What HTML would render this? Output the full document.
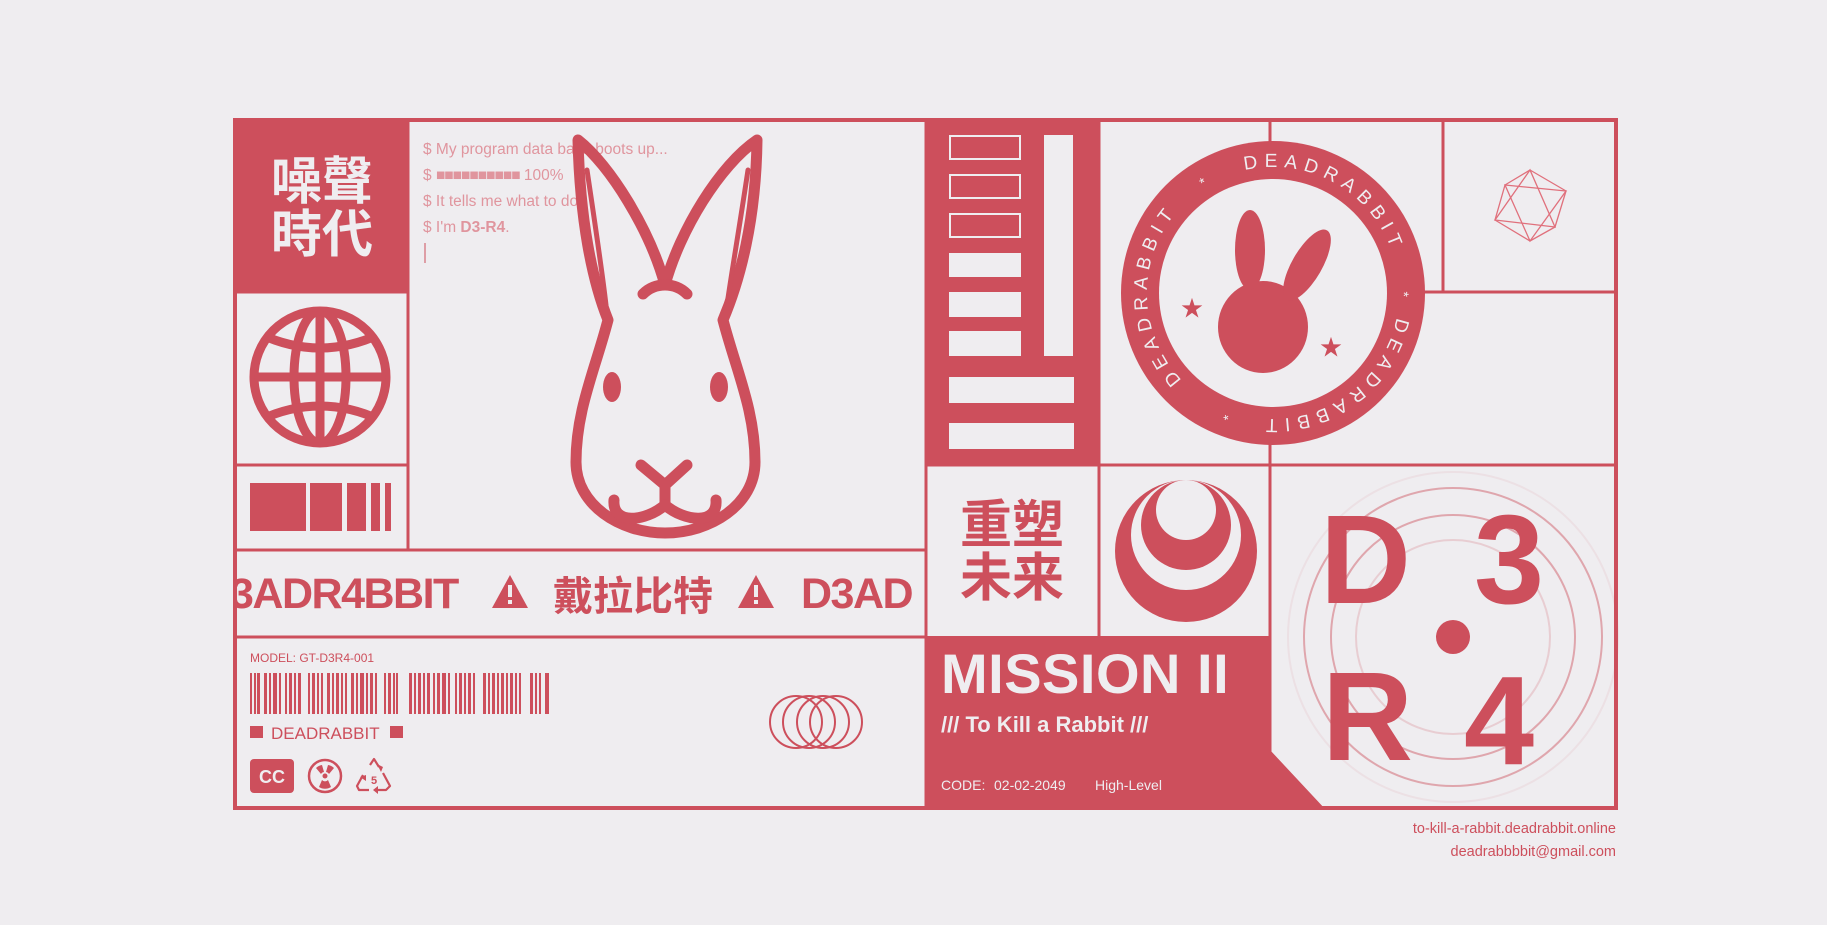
<!DOCTYPE html>
<html><head><meta charset="utf-8"><style>
html,body{margin:0;padding:0;background:#efedf0;}
svg{display:block}
</style></head><body>
<svg width="1827" height="925" viewBox="0 0 1827 925" xmlns="http://www.w3.org/2000/svg" font-family="Liberation Sans, Noto Sans CJK SC, sans-serif">
<defs>
<clipPath id="mq"><rect x="236" y="551" width="688" height="83"/></clipPath>
<clipPath id="gl"><circle cx="320" cy="377" r="66"/></clipPath>
<path id="ring" d="M1273,293 m0,-126 a126,126 0 1,1 0,252 a126,126 0 1,1 0,-252"/>
</defs>
<rect width="1827" height="925" fill="#efedf0"/>
<g fill="#cd4f5c">
<rect x="233" y="118" width="175" height="174"/>
<rect x="926" y="118" width="173" height="346"/>
<polygon points="926,636 1270,636 1270,750 1326,810 926,810"/>
</g>
<g stroke="#cd4f5c" stroke-width="3" fill="none">
<rect x="235" y="120" width="1381" height="688" stroke-width="4"/>
<line x1="408" y1="118" x2="408" y2="549"/>
<line x1="233" y1="292" x2="408" y2="292"/>
<line x1="233" y1="465" x2="408" y2="465"/>
<line x1="233" y1="550" x2="926" y2="550"/>
<line x1="233" y1="637" x2="926" y2="637"/>
<line x1="926" y1="118" x2="926" y2="810"/>
<line x1="1099" y1="118" x2="1099" y2="636"/>
<line x1="1270" y1="118" x2="1270" y2="810"/>
<line x1="926" y1="465" x2="1618" y2="465"/>
<line x1="1443" y1="118" x2="1443" y2="292"/>
<line x1="1270" y1="292" x2="1618" y2="292"/>
</g>
<g fill="#efedf0" font-weight="bold" font-size="51" font-family="Noto Sans CJK TC, sans-serif">
<text x="322" y="199" text-anchor="middle">噪聲</text>
<text x="322" y="252" text-anchor="middle">時代</text>
</g>
<g stroke="#cd4f5c" stroke-width="9" fill="none">
<circle cx="320" cy="377" r="66"/>
<g clip-path="url(#gl)">
<line x1="320" y1="311" x2="320" y2="443"/>
<line x1="254" y1="377" x2="386" y2="377"/>
<ellipse cx="320" cy="377" rx="26" ry="66"/>
<path d="M260,334 Q320,362 380,334"/>
<path d="M260,420 Q320,392 380,420"/>
</g>
</g>
<g fill="#cd4f5c">
<rect x="250" y="483" width="56" height="48"/><rect x="310" y="483" width="32" height="48"/>
<rect x="347" y="483" width="19" height="48"/><rect x="371" y="483" width="9" height="48"/><rect x="385" y="483" width="6" height="48"/>
</g>
<g fill="#e0959e" font-size="15.5">
<text x="423" y="154">$ My program data bank boots up...</text>
<text x="423" y="180">$ <tspan letter-spacing="-1">■■■■■■■■■■</tspan> 100%</text>
<text x="423" y="206">$ It tells me what to do</text>
<text x="423" y="232">$ I'm <tspan font-weight="bold">D3-R4</tspan>.</text>
</g>
<line x1="425" y1="243" x2="425" y2="263" stroke="#cd4f5c" stroke-width="1"/>
<g stroke="#cd4f5c" stroke-width="11" fill="none" stroke-linecap="round" stroke-linejoin="round">
<path d="M578,140 C580,220 592,280 608,320 C595,370 576,410 576,462 C576,505 620,533 665,533 C710,533 755,505 755,462 C755,410 736,370 723,320 C740,280 756,220 757,140 C720,165 680,230 665,285 C650,230 610,165 578,140 Z"/>
<path d="M587,170 C596,230 602,270 606,305" stroke-width="5"/>
<path d="M748,170 C739,230 732,270 727,305" stroke-width="5"/>
<path d="M643,294 C655,282 675,282 687,294"/>
<path d="M641,465 L665,485 L687,465 M665,485 L665,505"/>
<path d="M614,500 C612,525 645,522 665,505 C685,522 718,525 716,500"/>
</g>
<ellipse cx="612" cy="387" rx="9" ry="15" fill="#cd4f5c"/>
<ellipse cx="719" cy="387" rx="9" ry="15" fill="#cd4f5c"/>
<g fill="none" stroke="#efedf0" stroke-width="2">
<rect x="950" y="136" width="70" height="23"/><rect x="950" y="175" width="70" height="23"/><rect x="950" y="214" width="70" height="23"/>
</g>
<g fill="#efedf0">
<rect x="949" y="253" width="72" height="24"/><rect x="949" y="292" width="72" height="25"/><rect x="949" y="331" width="72" height="25"/>
<rect x="1044" y="135" width="29" height="221"/>
<rect x="949" y="377" width="125" height="26"/><rect x="949" y="423" width="125" height="26"/>
</g>
<circle cx="1273" cy="293" r="152" fill="#cd4f5c"/>
<circle cx="1273" cy="293" r="114" fill="#efedf0"/>
<g transform="rotate(-13 1273 293)" fill="#efedf0" font-size="19" letter-spacing="6.5">
<text><textPath href="#ring" startOffset="0">DEADRABBIT</textPath></text>
<text><textPath href="#ring" startOffset="251">DEADRABBIT</textPath></text>
<text><textPath href="#ring" startOffset="526">DEADRABBIT</textPath></text>
<text font-size="14" letter-spacing="0"><textPath href="#ring" startOffset="225">*</textPath></text>
<text font-size="14" letter-spacing="0"><textPath href="#ring" startOffset="467">*</textPath></text>
<text font-size="14" letter-spacing="0"><textPath href="#ring" startOffset="746">*</textPath></text>
</g>
<g fill="#cd4f5c">
<ellipse cx="1263" cy="327" rx="45" ry="46"/>
<ellipse cx="1250" cy="250" rx="15" ry="40"/>
<ellipse cx="1307" cy="265" rx="15" ry="40" transform="rotate(30 1307 265)"/>
<text x="1192" y="316" font-size="22" text-anchor="middle">★</text>
<text x="1331" y="355" font-size="22" text-anchor="middle">★</text>
</g>
<g stroke="#e0707c" stroke-width="1.3" fill="none">
<polygon points="1530,170 1566,191 1555,227 1530,241 1495,220 1505,185"/>
<polygon points="1530,170 1495,220 1555,227"/>
<polygon points="1530,241 1505,185 1566,191"/>
</g>
<g clip-path="url(#mq)" fill="#cd4f5c" font-weight="bold">
<text x="230" y="608" font-size="43" letter-spacing="-1.5">3ADR4BBIT</text>
<polygon points="510,575 528,608 492,608"/><rect x="508" y="585" width="4" height="12" fill="#efedf0"/><rect x="508" y="600" width="4" height="4" fill="#efedf0"/>
<text x="553" y="610" font-size="40" font-family="Noto Sans CJK SC, sans-serif">戴拉比特</text>
<polygon points="756,575 774,608 738,608"/><rect x="754" y="585" width="4" height="12" fill="#efedf0"/><rect x="754" y="600" width="4" height="4" fill="#efedf0"/>
<text x="801" y="608" font-size="43" letter-spacing="-1.5">D3AD</text>
</g>
<text x="250" y="662" font-size="12" fill="#cd4f5c">MODEL: GT-D3R4-001</text>
<g fill="#cd4f5c">
<rect x="250" y="673" width="2" height="41"/><rect x="254" y="673" width="2" height="41"/><rect x="257" y="673" width="3" height="41"/>
<rect x="264" y="673" width="3" height="41"/><rect x="269" y="673" width="2" height="41"/><rect x="273" y="673" width="4" height="41"/><rect x="279" y="673" width="2" height="41"/>
<rect x="285" y="673" width="2" height="41"/><rect x="289" y="673" width="3" height="41"/><rect x="294" y="673" width="2" height="41"/><rect x="298" y="673" width="3" height="41"/>
<rect x="308" y="673" width="2" height="41"/><rect x="312" y="673" width="3" height="41"/><rect x="317" y="673" width="2" height="41"/><rect x="321" y="673" width="2" height="41"/>
<rect x="327" y="673" width="3" height="41"/><rect x="332" y="673" width="2" height="41"/><rect x="336" y="673" width="3" height="41"/><rect x="341" y="673" width="2" height="41"/><rect x="345" y="673" width="2" height="41"/>
<rect x="351" y="673" width="3" height="41"/><rect x="356" y="673" width="2" height="41"/><rect x="360" y="673" width="4" height="41"/><rect x="366" y="673" width="2" height="41"/><rect x="370" y="673" width="3" height="41"/><rect x="375" y="673" width="2" height="41"/>
<rect x="384" y="673" width="2" height="41"/><rect x="388" y="673" width="3" height="41"/><rect x="393" y="673" width="2" height="41"/><rect x="396" y="673" width="2" height="41"/>
<rect x="409" y="673" width="3" height="41"/><rect x="414" y="673" width="2" height="41"/><rect x="418" y="673" width="3" height="41"/><rect x="423" y="673" width="2" height="41"/><rect x="427" y="673" width="3" height="41"/>
<rect x="433" y="673" width="2" height="41"/><rect x="437" y="673" width="3" height="41"/><rect x="442" y="673" width="4" height="41"/><rect x="448" y="673" width="2" height="41"/>
<rect x="455" y="673" width="2" height="41"/><rect x="459" y="673" width="3" height="41"/><rect x="464" y="673" width="2" height="41"/><rect x="468" y="673" width="3" height="41"/><rect x="473" y="673" width="2" height="41"/>
<rect x="483" y="673" width="3" height="41"/><rect x="488" y="673" width="2" height="41"/><rect x="492" y="673" width="3" height="41"/><rect x="497" y="673" width="2" height="41"/><rect x="501" y="673" width="3" height="41"/>
<rect x="506" y="673" width="2" height="41"/><rect x="510" y="673" width="3" height="41"/><rect x="515" y="673" width="2" height="41"/><rect x="519" y="673" width="2" height="41"/>
<rect x="530" y="673" width="3" height="41"/><rect x="535" y="673" width="2" height="41"/><rect x="539" y="673" width="2" height="41"/><rect x="545" y="673" width="4" height="41"/>
<rect x="250" y="726" width="13" height="12"/><rect x="390" y="726" width="13" height="12"/>
</g>
<text x="271" y="739" font-size="17" fill="#cd4f5c">DEADRABBIT</text>
<rect x="250" y="759" width="44" height="34" rx="4" fill="#cd4f5c"/>
<text x="272" y="783" font-size="18" font-weight="bold" fill="#efedf0" text-anchor="middle">CC</text>
<circle cx="325" cy="776" r="16" fill="none" stroke="#cd4f5c" stroke-width="2.5"/>
<g fill="#cd4f5c">
<circle cx="325" cy="776" r="2.5"/>
<path d="M316,768 A11,11 0 0,1 322,765 L324,772 A4,4 0 0,0 321,774 Z"/>
<path d="M334,768 A11,11 0 0,0 328,765 L326,772 A4,4 0 0,1 329,774 Z"/>
<path d="M319,787 A11,11 0 0,0 331,787 L328,780 A4,4 0 0,1 322,780 Z"/>
</g>
<g fill="none" stroke="#cd4f5c" stroke-width="2.2" stroke-linejoin="round">
<path d="M370,765 L374,759 L379,767"/>
<path d="M383,773 L390,786 L386,790 L378,790"/>
<path d="M369,790 L359,790 L357,786 L363,775"/>
</g>
<g fill="#cd4f5c">
<polygon points="377,764 383,767 381,772"/>
<polygon points="378,786 378,794 373,790"/>
<polygon points="360,777 366,775 366,781"/>
</g>
<text x="374" y="784" font-size="11" font-weight="bold" fill="#cd4f5c" text-anchor="middle">5</text>
<g fill="none" stroke="#cd4f5c" stroke-width="2">
<circle cx="796" cy="722" r="26"/><circle cx="809" cy="722" r="26"/><circle cx="823" cy="722" r="26"/><circle cx="836" cy="722" r="26"/>
</g>
<g fill="#cd4f5c" font-weight="bold" font-size="52" font-family="Noto Sans CJK SC, sans-serif">
<text x="1012" y="543" text-anchor="middle">重塑</text>
<text x="1012" y="596" text-anchor="middle">未来</text>
</g>
<circle cx="1186" cy="551" r="71" fill="#cd4f5c"/>
<circle cx="1186" cy="535" r="55" fill="#efedf0"/>
<circle cx="1186" cy="525" r="45" fill="#cd4f5c"/>
<circle cx="1186" cy="510" r="30" fill="#efedf0"/>
<text x="941" y="693" font-size="56" font-weight="bold" fill="#efedf0" letter-spacing="0.5">MISSION II</text>
<text x="941" y="732" font-size="22" font-weight="bold" fill="#efedf0">/// To Kill a Rabbit ///</text>
<g font-size="14" fill="#efedf0">
<text x="941" y="790">CODE:</text>
<text x="994" y="790">02-02-2049</text>
<text x="1095" y="790">High-Level</text>
</g>
<g fill="none" stroke="#cd4f5c">
<circle cx="1453" cy="637" r="165" stroke-opacity="0.08" stroke-width="2"/>
<circle cx="1453" cy="637" r="149" stroke-opacity="0.45" stroke-width="2"/>
<circle cx="1453" cy="637" r="122" stroke-opacity="0.45" stroke-width="2"/>
<circle cx="1453" cy="637" r="97" stroke-opacity="0.2" stroke-width="2"/>
</g>
<g fill="#cd4f5c" font-weight="bold" font-size="126">
<text x="1320" y="603">D</text>
<text x="1474" y="603">3</text>
<text x="1322" y="760">R</text>
<text x="1464" y="764">4</text>
</g>
<circle cx="1453" cy="637" r="17" fill="#cd4f5c"/>
<g fill="#cd4f5c" font-size="14.5" text-anchor="end">
<text x="1616" y="833">to-kill-a-rabbit.deadrabbit.online</text>
<text x="1616" y="856">deadrabbbbit@gmail.com</text>
</g>
</svg>
</body></html>
